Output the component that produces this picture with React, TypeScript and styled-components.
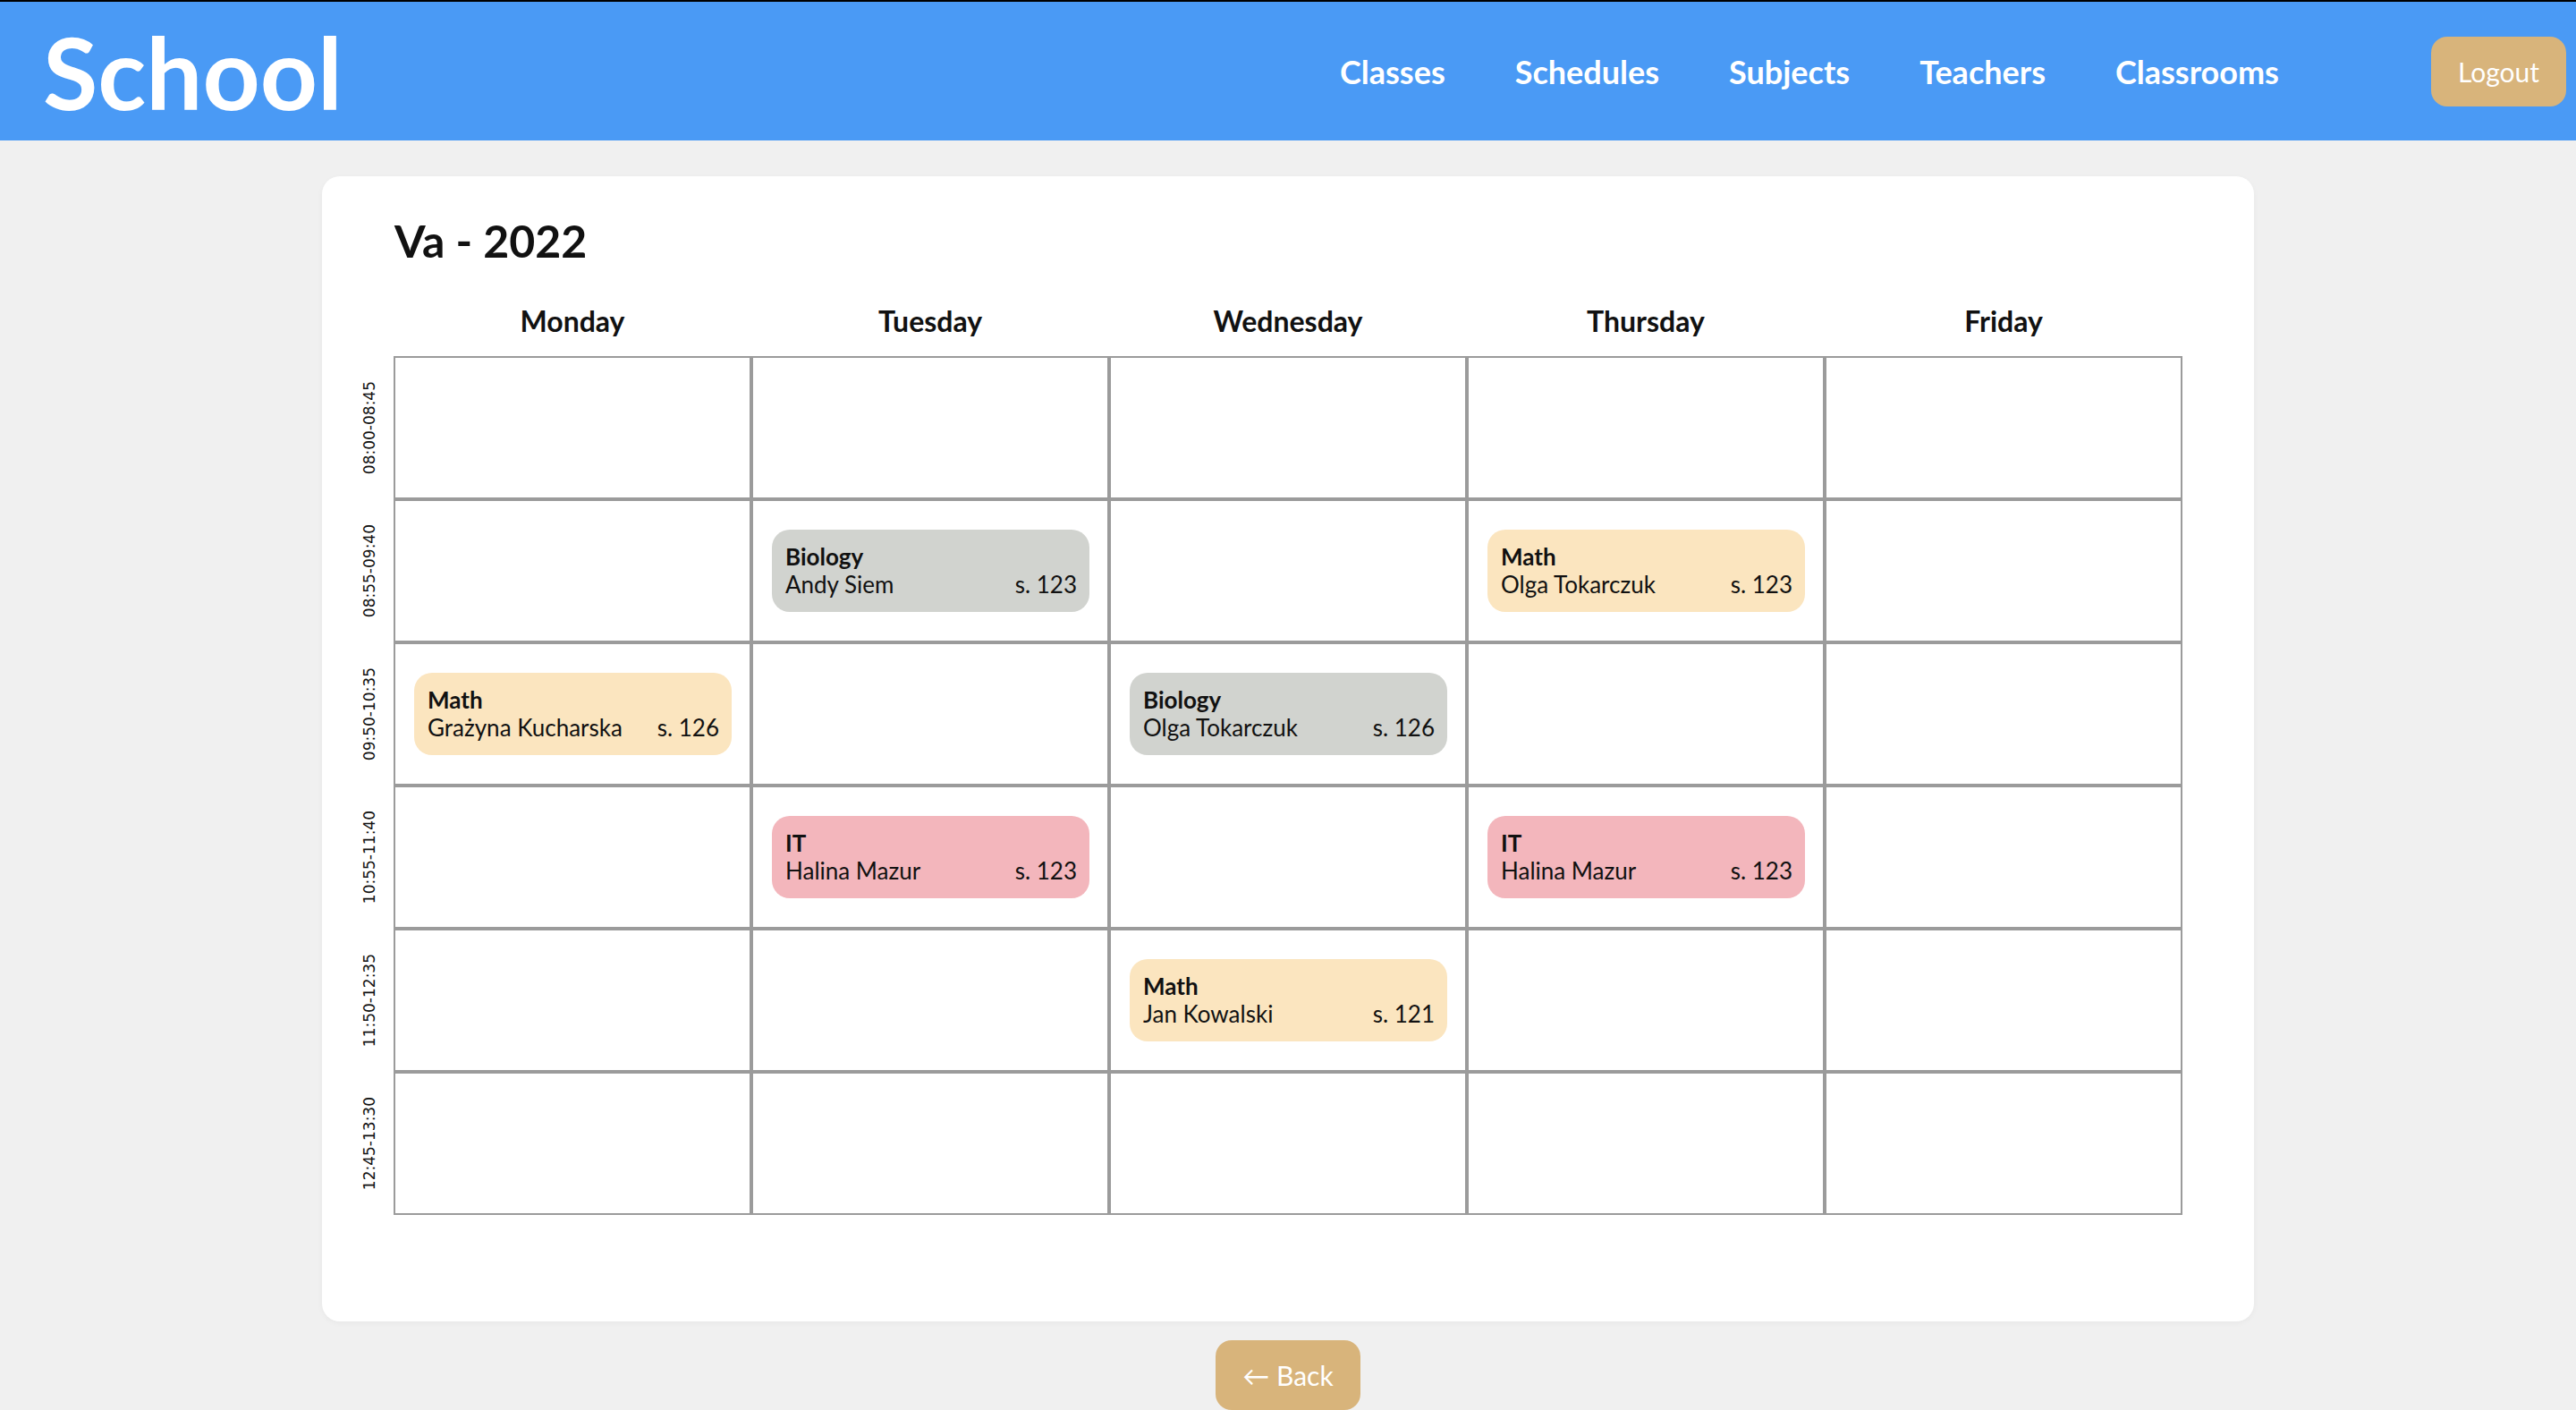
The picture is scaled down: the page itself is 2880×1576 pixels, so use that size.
import React from "react";
import styled, { createGlobalStyle } from "styled-components";

interface Lesson {
  subject: string;
  teacher: string;
  room: string;
}

const GlobalStyle = createGlobalStyle`
  body {
    margin: 0;
    background: #f0f0f0;
    font-family: Lato, "Noto Sans", sans-serif;
    color: #111;
  }
`;

const subjectColors: Record<string, string> = {
  Math: "#fbe5bf",
  Biology: "#d1d3cf",
  IT: "#f3b6bc",
};

const days = ["Monday", "Tuesday", "Wednesday", "Thursday", "Friday"];

const hours = [
  "08:00-08:45",
  "08:55-09:40",
  "09:50-10:35",
  "10:55-11:40",
  "11:50-12:35",
  "12:45-13:30",
];

// plan[row][day]
const plan: (Lesson | null)[][] = [
  [null, null, null, null, null],
  [
    null,
    { subject: "Biology", teacher: "Andy Siem", room: "s. 123" },
    null,
    { subject: "Math", teacher: "Olga Tokarczuk", room: "s. 123" },
    null,
  ],
  [
    { subject: "Math", teacher: "Grażyna Kucharska", room: "s. 126" },
    null,
    { subject: "Biology", teacher: "Olga Tokarczuk", room: "s. 126" },
    null,
    null,
  ],
  [
    null,
    { subject: "IT", teacher: "Halina Mazur", room: "s. 123" },
    null,
    { subject: "IT", teacher: "Halina Mazur", room: "s. 123" },
    null,
  ],
  [
    null,
    null,
    { subject: "Math", teacher: "Jan Kowalski", room: "s. 121" },
    null,
    null,
  ],
  [null, null, null, null, null],
];

const Header = styled.header`
  display: flex;
  align-items: center;
  justify-content: space-between;
  height: 155px;
  border-top: 2px solid #000;
  background: #4a9af5;
  padding: 0 11px 0 48px;
`;

const Logo = styled.div`
  font-size: 112px;
  font-weight: 700;
  color: #fff;
`;

const RightSide = styled.div`
  display: flex;
  align-items: center;
  gap: 170px;
`;

const Nav = styled.nav`
  display: flex;
  gap: 78px;
`;

const NavLink = styled.a`
  font-size: 36px;
  font-weight: 700;
  color: #fff;
  text-decoration: none;
  cursor: pointer;
`;

const GoldButton = styled.button`
  height: 78px;
  padding: 0 30px;
  border: none;
  border-radius: 18px;
  background: #d8b47b;
  color: #fff;
  font-family: Lato, sans-serif;
  font-size: 30px;
  font-weight: 400;
  cursor: pointer;
`;

const Main = styled.main`
  display: flex;
  flex-direction: column;
  align-items: center;
  padding-top: 40px;
  gap: 21px;
`;

const Card = styled.section`
  width: 2160px;
  box-sizing: border-box;
  background: #fff;
  border-radius: 20px;
  box-shadow: 0 2px 6px rgba(0, 0, 0, 0.04);
  padding: 42px 80px 119px 39px;
`;

const Title = styled.h1`
  margin: 0 0 0 42px;
  font-size: 50px;
  font-weight: 700;
  line-height: 60px;
`;

const Timetable = styled.div`
  display: grid;
  grid-template-columns: 41px repeat(5, 400px);
  grid-template-rows: 60px;
  grid-auto-rows: 160px;
  margin-top: 39px;
`;

const DayHead = styled.div`
  padding-top: 2px;
  font-size: 32px;
  font-weight: 700;
  text-align: center;
  line-height: 38px;
  align-self: start;
`;

const HourLabel = styled.div`
  align-self: center;
  justify-self: start;
  margin-left: 5px;
  writing-mode: vertical-rl;
  transform: rotate(180deg);
  font-family: "DejaVu Sans", sans-serif;
  font-size: 17px;
  line-height: 19px;
  color: #111;
`;

const Cell = styled.div`
  box-sizing: border-box;
  border: 2px solid #9b9b9b;
  display: flex;
  align-items: center;
  padding: 0 20px 0 21px;
`;

const LessonCard = styled.div<{ $bg: string }>`
  flex: 1;
  background: ${(p) => p.$bg};
  border-radius: 20px;
  padding: 15px 14px 15px 15px;
  font-size: 26px;
  line-height: 31px;
`;

const Subject = styled.div`
  font-weight: 700;
`;

const Line = styled.div`
  display: flex;
  justify-content: space-between;
`;

export default function App() {
  return (
    <>
      <GlobalStyle />
      <Header>
        <Logo>School</Logo>
        <RightSide>
          <Nav>
            <NavLink>Classes</NavLink>
            <NavLink>Schedules</NavLink>
            <NavLink>Subjects</NavLink>
            <NavLink>Teachers</NavLink>
            <NavLink>Classrooms</NavLink>
          </Nav>
          <GoldButton>Logout</GoldButton>
        </RightSide>
      </Header>
      <Main>
        <Card>
          <Title>Va - 2022</Title>
          <Timetable>
            <div />
            {days.map((d) => (
              <DayHead key={d}>{d}</DayHead>
            ))}
            {plan.map((row, i) => (
              <React.Fragment key={hours[i]}>
                <HourLabel>{hours[i]}</HourLabel>
                {row.map((lesson, j) => (
                  <Cell key={j}>
                    {lesson && (
                      <LessonCard $bg={subjectColors[lesson.subject]}>
                        <Subject>{lesson.subject}</Subject>
                        <Line>
                          <span>{lesson.teacher}</span>
                          <span>{lesson.room}</span>
                        </Line>
                      </LessonCard>
                    )}
                  </Cell>
                ))}
              </React.Fragment>
            ))}
          </Timetable>
        </Card>
        <GoldButton>← Back</GoldButton>
      </Main>
    </>
  );
}
